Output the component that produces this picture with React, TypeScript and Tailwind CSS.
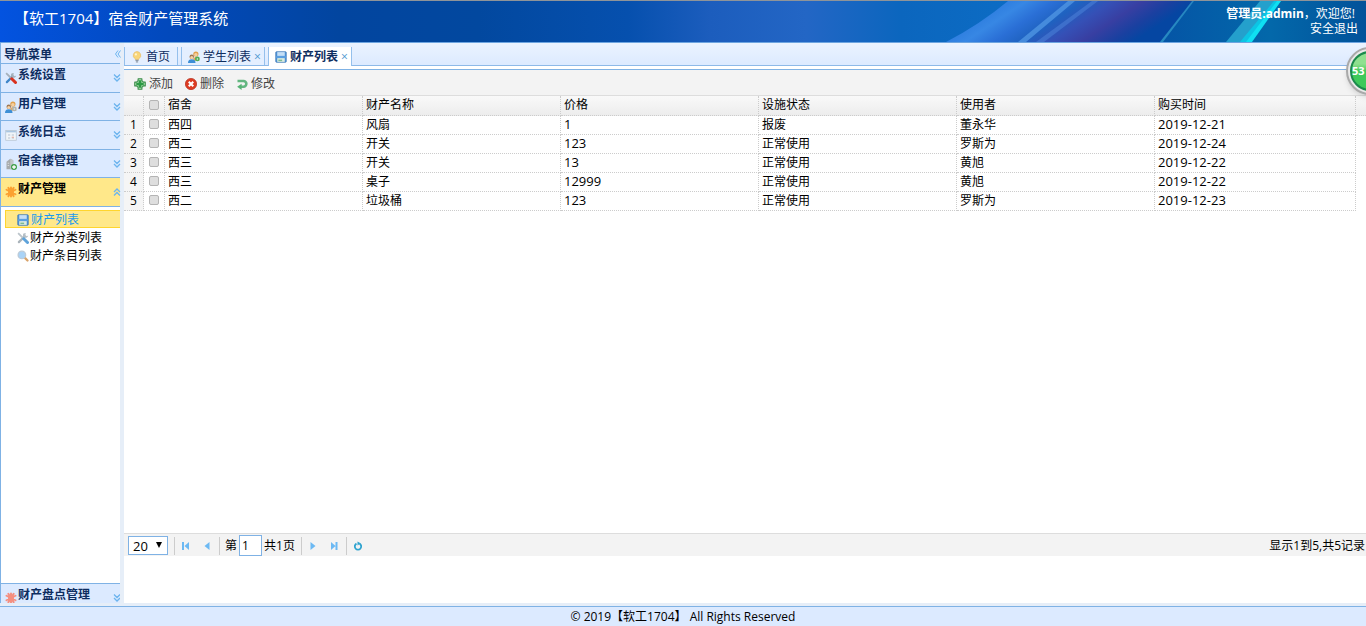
import React, { useState } from 'react';

interface Asset {
  room: string;
  name: string;
  price: string;
  status: string;
  user: string;
  date: string;
}

const ASSETS: Asset[] = [
  { room: '西四', name: '风扇', price: '1', status: '报废', user: '董永华', date: '2019-12-21' },
  { room: '西二', name: '开关', price: '123', status: '正常使用', user: '罗斯为', date: '2019-12-24' },
  { room: '西三', name: '开关', price: '13', status: '正常使用', user: '黄旭', date: '2019-12-22' },
  { room: '西三', name: '桌子', price: '12999', status: '正常使用', user: '黄旭', date: '2019-12-22' },
  { room: '西二', name: '垃圾桶', price: '123', status: '正常使用', user: '罗斯为', date: '2019-12-23' },
];

const COLUMNS = ['宿舍', '财产名称', '价格', '设施状态', '使用者', '购买时间'];

// --- Icons (16x16) ---

const svgProps = {
  viewBox: '0 0 16 16',
  className: 'h-3 w-3 shrink-0',
  fill: 'none',
  'aria-hidden': true,
};

const ToolsIcon = ({ gray = false }: { gray?: boolean }) => (
  <svg {...svgProps}>
    <path d="M2.500 13.500 10 6" stroke={gray ? '#a9b3ba' : '#3f86c9'} strokeWidth="3" strokeLinecap="round" />
    <path d="M9 1.500c-2 2-1 5 1 6 2 .6 4.500-.5 5-3l-2 1-2-1.500 1-2.500Z" fill={gray ? '#b5bfc6' : '#a3b0bb'} />
    <path d="M1.500 1.500 8 8" stroke={gray ? '#bcc5cb' : '#a5b1bb'} strokeWidth="2.400" />
    <path d="m9 9 5 5" stroke={gray ? '#5fa3da' : '#d9321f'} strokeWidth="4" strokeLinecap="round" />
  </svg>
);

const UsersIcon = ({ badge = '#b0b4b0' }: { badge?: string }) => (
  <svg {...svgProps}>
    <circle cx="10.500" cy="4" r="3.500" fill="#e0a04c" />
    <circle cx="10.500" cy="5" r="2.300" fill="#f5cfa0" />
    <path d="M7 13c0-4 1.500-5 4-5s4 2 4 5Z" fill="#e8a95c" />
    <circle cx="5" cy="7.500" r="3" fill="#9e7650" />
    <circle cx="5" cy="8.500" r="2" fill="#f7d3a8" />
    <path d="M0 16c0-4 2-5 5-5s5 1 5 5Z" fill="#3d8fd6" />
    <circle cx="12.500" cy="10.500" r="3.200" fill={badge} />
    <circle cx="12.500" cy="10.500" r="1" fill="#e9efe9" />
  </svg>
);

const LogIcon = () => (
  <svg {...svgProps}>
    <rect x="1" y="2" width="14" height="13" fill="#f1f5f9" stroke="#b4c2ce" />
    <path d="M1.500 3.500h13" stroke="#a9c6e2" strokeWidth="2" />
    <path d="M4 8h3M9 8h3M4 12h3M9 12h3" stroke="#b5c2cd" strokeWidth="1.500" />
    <path d="M9 11h3" stroke="#e7b1a0" strokeWidth="1.500" />
  </svg>
);

const BuildingIcon = () => (
  <svg {...svgProps}>
    <path d="M2 5 7 1l4 2v12H2Z" fill="#a7abad" />
    <path d="M7 1v14h4V3Z" fill="#c3c7c9" />
    <path d="M3.500 7h2M3.500 10h2" stroke="#e9ebec" />
    <circle cx="12" cy="12" r="4" fill="#3f9e48" />
    <path d="M12 9.500v5M9.500 12h5" stroke="#fff" strokeWidth="1.800" />
  </svg>
);

const GearIcon = ({ color }: { color: string }) => (
  <svg {...svgProps}>
    <path
      d="M8 2v12M2 5l12 6M2 11l12-6M4.500 2.500l7 11M11.500 2.500l-7 11"
      stroke={color}
      strokeWidth="2.600"
      strokeLinecap="round"
    />
    <circle cx="8" cy="8" r="4" fill={color} />
  </svg>
);

const SaveIcon = () => (
  <svg {...svgProps}>
    <rect x="1" y="1" width="14" height="14" rx="1" fill="#4f94d8" stroke="#3f78b4" />
    <rect x="3" y="1.500" width="10" height="5" fill="#c5dff6" />
    <rect x="1.500" y="7" width="13" height="2" fill="#5fa3e4" />
    <rect x="3" y="9.500" width="10" height="5" fill="#dcebe0" />
    <rect x="4.500" y="11.500" width="5" height="2" fill="#7dbb92" />
  </svg>
);

const SearchIcon = () => (
  <svg {...svgProps}>
    <path d="m10.500 10.500 3.500 3.500" stroke="#d9a36a" strokeWidth="3" strokeLinecap="round" />
    <circle cx="6.500" cy="6.500" r="5" fill="#a9d3f7" stroke="#bccbd9" strokeWidth="1.800" />
  </svg>
);

const BulbIcon = () => (
  <svg {...svgProps}>
    <path d="M8 .8a5 5 0 0 0-3 9c.8.600 1 1.200 1 2h4c0-.8.200-1.400 1-2a5 5 0 0 0-3-9Z" fill="#f9d679" stroke="#e8bd68" />
    <path d="M6 12.500h4M6.500 14.500h3" stroke="#8d99a8" strokeWidth="1.800" />
    <circle cx="6.500" cy="4.500" r="1.500" fill="#fff4cf" />
  </svg>
);

const AddIcon = () => (
  <svg {...svgProps}>
    <path
      d="M5.500 1h5v2.500l2 2H15v5h-2.500l-2 2V15h-5v-2.500l-2-2H1v-5h2.500l2-2Z"
      fill="#b5dfb5"
      stroke="#3c8e4b"
      strokeWidth="1.500"
      strokeLinejoin="round"
    />
    <path d="M8 3v10M3 8h10" stroke="#2d9a44" strokeWidth="3.500" />
  </svg>
);

const DeleteIcon = () => (
  <svg {...svgProps}>
    <circle cx="8" cy="8" r="7.500" fill="#dd3b22" stroke="#b8321f" />
    <path d="m5 5 6 6M11 5l-6 6" stroke="#fff" strokeWidth="2.800" />
  </svg>
);

const EditIcon = () => (
  <svg {...svgProps}>
    <path d="M2 4h8a3.800 3.800 0 0 1 0 7.600H6.500" stroke="#63b680" strokeWidth="3.500" />
    <path d="M7.500 7.500V16L1.500 11.800Z" fill="#55b274" />
  </svg>
);

const Chevrons = ({ up = false }: { up?: boolean }) => (
  <svg viewBox="0 0 8 8" className="h-2 w-2 shrink-0" fill="none" stroke="#6cb4ee" strokeWidth="1.300" aria-hidden>
    <path d={up ? 'M1 4 4 1 7 4M1 7.500 4 4.500 7 7.500' : 'M1 .5 4 3.500 7 .5M1 4 4 7 7 4'} />
  </svg>
);

const PagerIcon = ({ kind }: { kind: 'first' | 'prev' | 'next' | 'last' | 'reload' }) => {
  const shapes = {
    first: <path d="M0 0h2v8H0ZM7 0v8L2.500 4Z" />,
    prev: <path d="M5.500 0v8L.5 4Z" />,
    next: <path d="M1.500 0v8l5-4Z" />,
    last: <path d="M4.500 0h2v8h-2ZM0 0v8l4.500-4Z" />,
    reload: (
      <>
        <path d="M2.500 1.600A3.200 3.200 0 1 0 5.500 1.600" fill="none" stroke="#2ea3cf" strokeWidth="1.800" />
        <path d="M3.500-.5v4L6.500 1.300Z" fill="#2ea3cf" />
      </>
    ),
  };
  return (
    <svg viewBox="0 0 8 8" className="h-2 w-2 overflow-visible" fill="#6cb9f3" aria-hidden>
      {shapes[kind]}
    </svg>
  );
};

// Blue banner artwork behind the title
const Banner = () => (
  <svg
    className="absolute inset-0 h-full w-full"
    viewBox="0 0 1366 42"
    preserveAspectRatio="none"
    aria-hidden
  >
    <defs>
      <linearGradient id="base">
        <stop offset="0" stopColor="#0353e0" />
        <stop offset=".12" stopColor="#0249bd" />
        <stop offset=".25" stopColor="#02459f" />
        <stop offset=".35" stopColor="#02489f" />
        <stop offset=".46" stopColor="#0650ae" />
        <stop offset=".52" stopColor="#1c5dbd" />
        <stop offset=".59" stopColor="#2366c5" />
        <stop offset=".66" stopColor="#0b66be" />
        <stop offset=".74" stopColor="#0c6cc4" />
        <stop offset=".84" stopColor="#0552a5" />
        <stop offset=".93" stopColor="#0368aa" />
        <stop offset="1" stopColor="#02529a" />
      </linearGradient>
      <linearGradient id="streak" gradientUnits="userSpaceOnUse" x1="946" y1="42" x2="1005" y2="129">
        <stop offset="0" stopColor="#2f7fe0" />
        <stop offset=".1" stopColor="#3787e4" />
        <stop offset=".25" stopColor="#2a6fd6" />
        <stop offset=".4" stopColor="#1f62c0" />
        <stop offset=".56" stopColor="#3550b6" />
        <stop offset=".72" stopColor="#383fa2" />
        <stop offset=".88" stopColor="#1a40a0" />
        <stop offset="1" stopColor="#0546a2" />
      </linearGradient>
    </defs>
    <rect width="1366" height="42" fill="url(#base)" />
    <path d="M946 42Q980 24 1008 0h186l-34 42Z" fill="url(#streak)" />
    <path d="m1018 42 50-42h7l-49 42Z" fill="#4f95e2" opacity=".8" />
    <path d="m1036 42 56-42h6l-54 42Z" fill="#4f86dc" opacity=".5" />
    <path d="m1160 42 32-42h2l-31 42Z" fill="#2f96c8" opacity=".8" />
    <path d="m1226 42 34-42h21l-32 42Z" fill="#28a6cf" opacity=".9" />
    <path d="m1240 42 34-42h6l-31 42Z" fill="#0cc4e4" />
    <path d="m1246 42 31-42h4l-29 42Z" fill="#0fe0f2" />
  </svg>
);

interface MenuHeadProps {
  icon: React.ReactNode;
  label: string;
  open?: boolean;
}

const MenuHead: React.FC<MenuHeadProps> = ({ icon, label, open = false }) => (
  <button
    type="button"
    aria-expanded={open}
    className={`flex w-full items-start gap-px border-b border-[#7fb2e5] pl-1 text-left font-bold ${open ? 'bg-[#ffe88a] text-black' : 'bg-[#dceaff] text-[#0e2d5f]'}`}
  >
    <span className="pt-2">{icon}</span>
    <span className="flex-1 pt-[3px] leading-4">{label}</span>
    <span className="-mr-px pt-2.5">
      <Chevrons up={open} />
    </span>
  </button>
);

const Check = ({ label }: { label: string }) => (
  <input
    type="checkbox"
    aria-label={label}
    className="mx-auto block h-2.5 w-2.5 appearance-none rounded-xs border border-[#b4b4b4] bg-[#dedede] checked:bg-[#7fb2e5]"
  />
);

const Divider = () => <span className="h-[18px] w-px bg-[#cccccc]" />;

const tabClass = 'flex items-center border-x border-[#95c0ec] pt-px pl-1.5';
const cellClass = 'border-r border-b border-dotted border-[#cccccc]';
const toolClass = 'flex items-center gap-[3px]';

export default function App() {
  const [page, setPage] = useState('1');

  return (
    <div className="relative flex h-screen flex-col overflow-hidden bg-[#e6eef8] font-['Open_Sans','Noto_Sans_CJK_SC',sans-serif] text-xs text-black">
      <header className="relative h-[43px] shrink-0 border-t border-b border-t-[#8f9499] border-b-[#6ea5e0] text-white">
        <Banner />
        <div className="relative flex items-start justify-between">
          <h1 className="pt-[7px] pl-3.5 text-[15px] leading-5">【软工1704】宿舍财产管理系统</h1>
          <div className="pt-[5px] pr-2 text-right leading-[15px]">
            <div className="pr-[3px]">
              <strong>管理员:admin</strong>，欢迎您!
            </div>
            <a href="#logout" className="block">
              安全退出
            </a>
          </div>
        </div>
      </header>

      <div className="flex min-h-0 flex-1 gap-1">
        <nav className="flex w-[120px] shrink-0 flex-col border-l border-[#7fb2e5] bg-white">
          <div className="flex h-[21px] items-end justify-between border-b border-[#7fb2e5] bg-[#e0ecff] pl-[3px] font-bold text-[#0e2d5f]">
            <span className="leading-4">导航菜单</span>
            <button type="button" aria-label="收起" className="-mr-px flex h-[18px] items-center">
              <svg viewBox="0 0 8 8" className="h-2 w-2" fill="none" stroke="#6cb4ee" aria-hidden>
                <path d="M5 .5 2.500 4 5 7.500M7.500.5 5 4l2.500 3.500" />
              </svg>
            </button>
          </div>
          <div className="grid h-[143px] shrink-0 grid-rows-5">
            <MenuHead icon={<ToolsIcon />} label="系统设置" />
            <MenuHead icon={<UsersIcon />} label="用户管理" />
            <MenuHead icon={<LogIcon />} label="系统日志" />
            <MenuHead icon={<BuildingIcon />} label="宿舍楼管理" />
            <MenuHead icon={<GearIcon color="#fba131" />} label="财产管理" open />
          </div>
          <ul className="flex-1 pt-[3px] pl-1">
            <li>
              <a href="#assets" className="flex h-[18px] items-center gap-0.5 border border-r-0 border-[#ffd52e] bg-[#ffe88a] pt-0.5 pl-[11px] text-[#1e9bee]">
                <SaveIcon />
                财产列表
              </a>
            </li>
            <li>
              <a href="#types" className="flex h-[18px] items-center gap-px pt-0.5 pl-3">
                <ToolsIcon gray />
                财产分类列表
              </a>
            </li>
            <li>
              <a href="#items" className="flex h-[18px] items-center gap-px pt-0.5 pl-3">
                <SearchIcon />
                财产条目列表
              </a>
            </li>
          </ul>
          <div className="grid h-5 shrink-0 overflow-hidden border-t border-[#7fb2e5]">
            <MenuHead icon={<GearIcon color="#f58f80" />} label="财产盘点管理" />
          </div>
        </nav>

        <main className="flex min-w-0 flex-1 flex-col bg-white">
          <div className="flex h-[23px] shrink-0 items-end gap-[3px] border-b border-[#8db9e8] bg-linear-to-b from-[#ebf3ff] to-[#dceaff] text-[#0e2d5f]">
            <a href="#home" className={`${tabClass} h-[18px] gap-[3px] bg-[#e4efff] pr-[7px]`}>
              <BulbIcon />
              首页
            </a>
            <div className={`${tabClass} h-[18px] gap-[3px] bg-[#e4efff] pr-[3px]`}>
              <UsersIcon badge="#4fae57" />
              <a href="#students">学生列表</a>
              <button type="button" aria-label="关闭学生列表" className="leading-3 text-[#4d96cf]">×</button>
            </div>
            <div className={`${tabClass} -mb-px h-[19px] gap-[3px] bg-white pr-[3px] font-bold`}>
              <SaveIcon />
              <a href="#assets">财产列表</a>
              <button type="button" aria-label="关闭财产列表" className="leading-3 font-normal text-[#4d96cf]">×</button>
            </div>
          </div>

          <div className="mt-[3px] flex h-[27px] shrink-0 items-center gap-3 border-t border-b border-t-[#7fb2e5] border-b-[#dddddd] bg-[#f3f3f3] pt-0.5 pl-2.5 text-[#444444]">
            <button type="button" className={toolClass}>
              <AddIcon />
              添加
            </button>
            <button type="button" className={toolClass}>
              <DeleteIcon />
              删除
            </button>
            <button type="button" className={toolClass}>
              <EditIcon />
              修改
            </button>
          </div>

          <div className="flex-1 overflow-hidden">
            <table className="w-full table-fixed border-separate border-spacing-0 text-left">
              <colgroup>
                <col className="w-5" />
                <col className="w-[21px]" />
                {COLUMNS.map((c, i) => (
                  <col key={c} className={i < 5 ? 'w-[198px]' : ''} />
                ))}
                <col className="w-2.5" />
              </colgroup>
              <thead>
                <tr className="h-5 bg-linear-to-b from-[#f9f9f9] to-[#ececec]">
                  <th className={`${cellClass} p-0`} />
                  <th className={`${cellClass} px-0 pt-0 pb-0.5`}>
                    <Check label="全选" />
                  </th>
                  {COLUMNS.map((c) => (
                    <th key={c} className={`${cellClass} px-[3px] pt-0 pb-0.5 leading-4 font-normal`}>
                      {c}
                    </th>
                  ))}
                  <th className="border-b border-dotted border-[#cccccc] p-0" />
                </tr>
              </thead>
              <tbody>
                {ASSETS.map((a, i) => (
                  <tr key={i} className="h-[19px]">
                    <td className={`${cellClass} bg-[#f5f5f5] p-0 text-center leading-[18px]`}>{i + 1}</td>
                    <td className={`${cellClass} px-0 pt-0 pb-0.5`}>
                      <Check label={`选择第${i + 1}行`} />
                    </td>
                    {[a.room, a.name, a.price, a.status, a.user, a.date].map((v, j) => (
                      <td
                        key={j}
                        className={`${cellClass} px-[3px] pt-0 ${j === 2 || j === 5 ? 'pb-0.5 text-[13px] leading-4' : 'pb-0 leading-[18px]'}`}
                      >
                        {v}
                      </td>
                    ))}
                    <td className="p-0" />
                  </tr>
                ))}
              </tbody>
            </table>
          </div>

          <div className="mb-[47px] flex h-[23px] shrink-0 items-center border-t border-[#dddddd] bg-[#f3f3f3] pt-px pl-1">
            <div className="relative flex">
              <select
                aria-label="每页条数"
                className="h-[19px] w-10 appearance-none border border-[#7fb2e5] bg-white pl-1 text-[13px] leading-4"
              >
                <option>20</option>
                <option>50</option>
              </select>
              <svg viewBox="0 0 6 6" className="pointer-events-none absolute top-1.5 right-1.5 h-1.5 w-1.5" aria-hidden>
                <path d="M0 0h6L3 6Z" />
              </svg>
            </div>
            <div className="flex items-center pl-1.5">
              <Divider />
              <button type="button" aria-label="首页" className="flex w-[22px] justify-center"><PagerIcon kind="first" /></button>
              <button type="button" aria-label="上一页" className="flex w-[22px] justify-center"><PagerIcon kind="prev" /></button>
              <Divider />
              <label className="flex items-center pl-[5px]">
                第
                <input
                  value={page}
                  onChange={(e) => setPage(e.target.value)}
                  className="mx-0.5 h-[21px] w-[23px] border border-[#7fb2e5] bg-white pl-0.5"
                />
                共1页
              </label>
              <span className="w-1.5" />
              <Divider />
              <button type="button" aria-label="下一页" className="flex w-[22px] justify-center"><PagerIcon kind="next" /></button>
              <button type="button" aria-label="末页" className="flex w-[22px] justify-center"><PagerIcon kind="last" /></button>
              <Divider />
              <button type="button" aria-label="刷新" className="flex w-[22px] justify-center"><PagerIcon kind="reload" /></button>
            </div>
            <span className="ml-auto pr-px">显示1到5,共5记录</span>
          </div>
        </main>
      </div>

      <footer className="mt-[3px] h-5 shrink-0 border-t border-[#7fb2e5] bg-[#dceaff] text-center leading-5">
        © 2019【软工1704】 All Rights Reserved
      </footer>

      {/* Floating round widget, half off the right edge */}
      <div className="absolute top-[47px] -right-7 flex h-12 w-12 items-center rounded-full border-2 border-[#a9a9a9] bg-[#e9e9e9] p-0.5 shadow-md">
        <div className="flex h-full w-full items-center rounded-full border-2 border-[#1c8a4c] bg-linear-to-b from-[#8fe08f] from-30% to-[#3ec95a] to-50% text-[11px] font-bold text-white">
          53
        </div>
      </div>
    </div>
  );
}
